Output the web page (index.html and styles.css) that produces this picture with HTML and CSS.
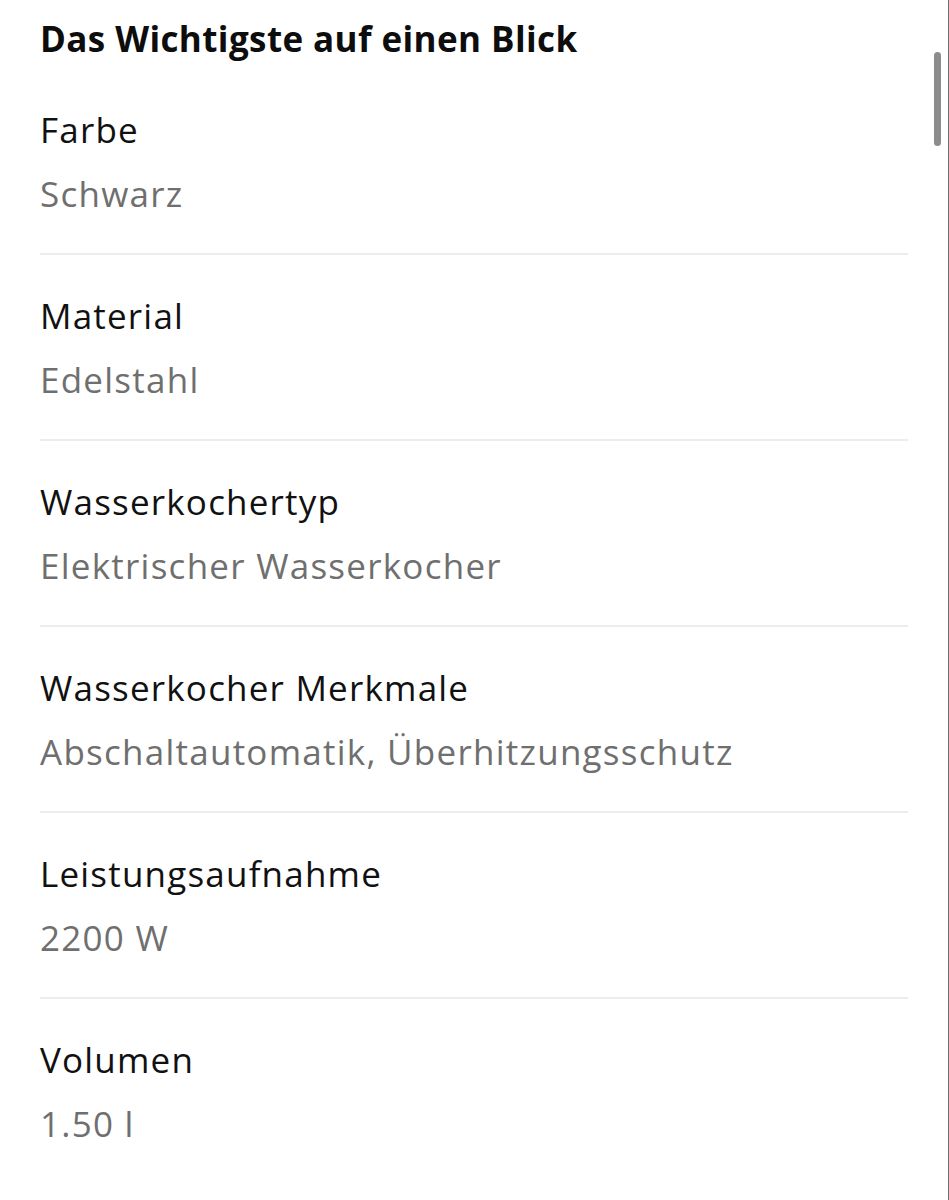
FILE: index.html
```html
<!DOCTYPE html>
<html lang="de">
<head>
<meta charset="utf-8">
<link rel="stylesheet" href="styles.css">
</head>
<body>
<div class="page">
  <h2 class="title">Das Wichtigste auf einen Blick</h2>
  <dl class="list">
    <div class="row"><dt>Farbe</dt><dd>Schwarz</dd></div>
    <div class="row"><dt>Material</dt><dd>Edelstahl</dd></div>
    <div class="row"><dt>Wasserkochertyp</dt><dd>Elektrischer Wasserkocher</dd></div>
    <div class="row"><dt>Wasserkocher Merkmale</dt><dd>Abschaltautomatik, Überhitzungsschutz</dd></div>
    <div class="row"><dt>Leistungsaufnahme</dt><dd>2200 W</dd></div>
    <div class="row last"><dt>Volumen</dt><dd>1.50 l</dd></div>
  </dl>
  <div class="scrollbar"></div>
</div>
</body>
</html>
```

FILE: styles.css
```css
html, body {
  margin: 0;
  padding: 0;
  background: #ffffff;
}
body {
  font-family: "Open Sans", "Lato", sans-serif;
  color: #111111;
}
.page {
  position: relative;
  width: 949px;
  height: 1200px;
  overflow: hidden;
  box-sizing: border-box;
  padding: 0 40px;
  border-right: 1px solid #6d6d6d;
}
.title {
  margin: 0 0 6px 0;
  padding-top: 15px;
  font-size: 35px;
  line-height: 48px;
  font-weight: 700;
  letter-spacing: 0.4px;
  color: #0d0d0d;
}
.list {
  margin: 0;
}
.row {
  padding-top: 37px;
  padding-bottom: 35px;
  border-bottom: 2px solid #ececec;
}
.row.last {
  border-bottom: none;
}
.row dt {
  font-size: 35px;
  line-height: 48px;
  letter-spacing: 1.2px;
  color: #111111;
}
.row dd {
  margin: 16px 0 0 0;
  font-size: 35px;
  line-height: 48px;
  letter-spacing: 1.25px;
  color: #6f6f6f;
}
.scrollbar {
  position: absolute;
  top: 52px;
  right: 7px;
  width: 7px;
  height: 94px;
  border-radius: 4px;
  background: #8c8c8c;
}
```
